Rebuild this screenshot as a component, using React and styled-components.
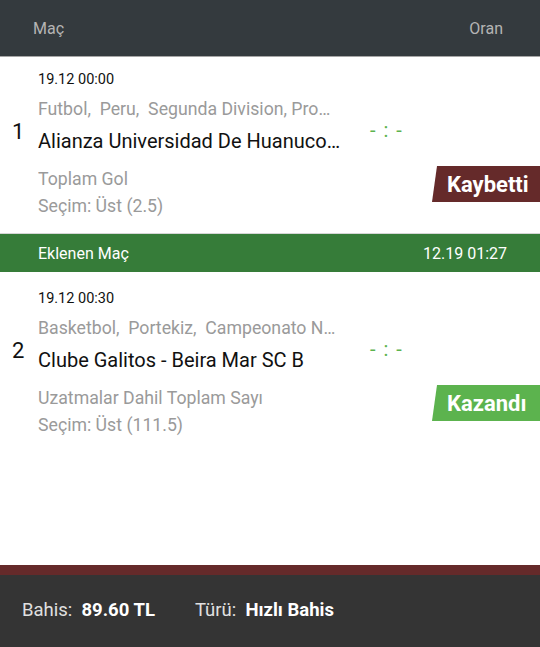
import React from 'react'
import styled, { createGlobalStyle } from 'styled-components';

const GlobalStyle = createGlobalStyle`
    html, body {
        margin: 0;
        padding: 0;
        background: #ffffff;
        font-family: Roboto, "Noto Sans", "Liberation Sans", sans-serif;
    }
`;

const Page = styled.div`
    height: 100vh;
    display: flex;
    flex-direction: column;
`;

const Header = styled.div`
    height: 56px;
    flex-shrink: 0;
    display: flex;
    align-items: center;
    justify-content: space-between;
    padding: 0 37px 0 33px;
    background-color: #343a3e;
    border-bottom: 1px solid #a6a6a6;
    color: #b4b4b4;
    font-size: 16px;
`;

const Content = styled.div`
    flex: 1;
`;

const Row = styled.div`
    display: flex;
    padding: ${props => props.top}px 0 13px;
`;

const Index = styled.div`
    width: 38px;
    padding-left: 12px;
    box-sizing: border-box;
    margin-top: ${props => props.offset}px;
    font-size: 22px;
    line-height: 24px;
    color: #111;
`;

const Info = styled.div`
    width: 303px;
    min-width: 0;
`;

const Date = styled.div`
    font-size: 14.5px;
    line-height: 18px;
    color: #111;
`;

const Line = styled.div`
    font-size: 17.7px;
    line-height: ${props => props.lh || 27}px;
    color: #9a9a9a;
    white-space: pre;
    overflow: hidden;
    text-overflow: ellipsis;
    margin-top: ${props => props.mt || 0}px;
`;

const Name = styled.div`
    font-size: 20px;
    line-height: 28px;
    color: #111;
    white-space: nowrap;
    overflow: hidden;
    text-overflow: ellipsis;
    margin-top: 5px;
    margin-bottom: 11px;
`;

const Side = styled.div`
    flex: 1;
    display: flex;
    flex-direction: column;
    align-items: stretch;
`;

const Score = styled.div`
    margin-top: ${props => props.offset}px;
    padding-left: 29px;
    font-size: 20px;
    line-height: 24px;
    letter-spacing: 1.5px;
    color: #5cb34e;
    white-space: pre;
`;

const Badge = styled.div`
    align-self: flex-end;
    margin-top: ${props => props.offset}px;
    width: 108px;
    height: 36px;
    box-sizing: border-box;
    padding-left: 15px;
    display: flex;
    align-items: center;
    background-color: ${props => props.won ? '#5cb34e' : '#652a2a'};
    clip-path: polygon(5px 0, 100% 0, 100% 100%, 0 100%);
    color: #fff;
    font-size: 22px;
    font-weight: 700;
    white-space: nowrap;
`;

const Added = styled.div`
    height: 38px;
    display: flex;
    align-items: center;
    justify-content: space-between;
    padding: 0 33px 0 38px;
    background-color: #367c39;
    border-top: 1px solid #d6d6d6;
    color: #fff;
    font-size: 16px;
`;

const Footer = styled.div`
    flex-shrink: 0;
    border-top: 10px solid #652a2a;
    background-color: #343434;
    height: 69px;
    box-sizing: content-box;
    display: flex;
    align-items: center;
    padding: 0 22px 3px;
    gap: 40px;
    font-size: 18.5px;
`;

const FooterItem = styled.div`
    color: #e0e0e0;
    white-space: pre;
`;

const FooterValue = styled.b`
    color: #fff;
    font-weight: 700;
`;

const Match = ({ top, no, date, category, name, market, choice, won }) => (
    <Row top={top}>
        <Index offset={49}>{no}</Index>
        <Info>
            <Date>{date}</Date>
            <Line lh={26} mt={7}>{category}</Line>
            <Name>{name}</Name>
            <Line>{market}</Line>
            <Line>{choice}</Line>
        </Info>
        <Side>
            <Score offset={47}>{'- : -'}</Score>
            <Badge offset={24} won={won}>{won ? 'Kazandı' : 'Kaybetti'}</Badge>
        </Side>
    </Row>
);

const App = () => {
  return (
    <Page>
        <GlobalStyle />
        <Header>
            <span>Maç</span>
            <span>Oran</span>
        </Header>
        <Content>
            <Match
                top={14}
                no="1"
                date="19.12 00:00"
                category={'Futbol,  Peru,  Segunda Division, Promocion'}
                name="Alianza Universidad De Huanuco - Deportivo Coopsol"
                market="Toplam Gol"
                choice="Seçim: Üst (2.5)"
            />
            <Added>
                <span>Eklenen Maç</span>
                <span>12.19 01:27</span>
            </Added>
            <Match
                top={18}
                no="2"
                date="19.12 00:30"
                category={'Basketbol,  Portekiz,  Campeonato Nacional'}
                name="Clube Galitos - Beira Mar SC B"
                market="Uzatmalar Dahil Toplam Sayı"
                choice="Seçim: Üst (111.5)"
                won
            />
        </Content>
        <Footer>
            <FooterItem>Bahis:  <FooterValue>89.60 TL</FooterValue></FooterItem>
            <FooterItem>Türü:  <FooterValue>Hızlı Bahis</FooterValue></FooterItem>
        </Footer>
    </Page>
  )
}

export default App
